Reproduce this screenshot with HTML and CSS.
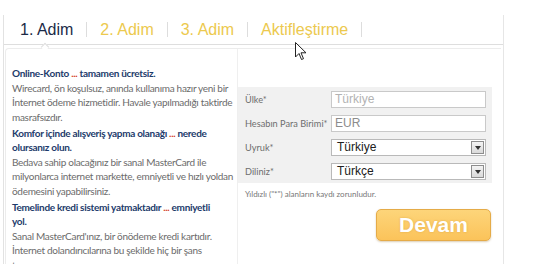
FILE: index.html
```html
<!DOCTYPE html>
<html lang="tr">
<head>
    <meta charset="UTF-8">
    <meta name="viewport" content="width=device-width, initial-scale=1.0">
    <title>Kayıt</title>
    <link rel="stylesheet" href="styles.css">
</head>
<body>
    <div class="wizard">
        <div class="tabs">
            <span class="tab active">1. Adim</span>
            <span class="sep"></span>
            <span class="tab">2. Adim</span>
            <span class="sep"></span>
            <span class="tab">3. Adim</span>
            <span class="sep"></span>
            <span class="tab">Aktifleştirme</span>
            <span class="sep"></span>
        </div>

        <div class="content">
            <div class="info">
                <h4>Online-Konto <span class="dots">...</span> tamamen ücretsiz.</h4>
                <p>Wirecard, ön koşulsuz, anında kullanıma hazır yeni bir<br>
                İnternet ödeme hizmetidir. Havale yapılmadığı taktirde<br>
                masrafsızdır.</p>
                <h4>Komfor içinde alışveriş yapma olanağı <span class="dots">...</span> nerede<br>
                olursanız olun.</h4>
                <p>Bedava sahip olacağınız bir sanal MasterCard ile<br>
                milyonlarca internet markette, emniyetli ve hızlı yoldan<br>
                ödemesini yapabilirsiniz.</p>
                <h4>Temelinde kredi sistemi yatmaktadır <span class="dots">...</span> emniyetli<br>
                yol.</h4>
                <p>Sanal MasterCard'ınız, bir önödeme kredi kartıdır.<br>
                İnternet dolandırıcılarına bu şekilde hiç bir şans<br>
                tanınmaz.</p>
            </div>

            <div class="form">
                <div class="fields">
                    <div class="row">
                        <label>Ülke*</label>
                        <div class="field light">Türkiye</div>
                    </div>
                    <div class="row">
                        <label>Hesabın Para Birimi*</label>
                        <div class="field">EUR</div>
                    </div>
                    <div class="row">
                        <label>Uyruk*</label>
                        <div class="field select">Türkiye<span class="arrow"></span></div>
                    </div>
                    <div class="row">
                        <label>Diliniz*</label>
                        <div class="field select">Türkçe<span class="arrow"></span></div>
                    </div>
                </div>
                <p class="note">Yıldızlı ("*") alanların kaydı zorunludur.</p>
                <div class="actions">
                    <button class="next">Devam</button>
                </div>
            </div>
        </div>
    </div>

    <svg class="cursor" width="12" height="19" viewBox="0 0 12 19">
        <path d="M0.5 0.5 L0.5 15 L4 11.5 L6.5 17.5 L8.5 16.7 L6 10.8 L11 10.8 Z" fill="#fff" stroke="#222" stroke-width="1"/>
    </svg>
</body>
</html>
```

FILE: styles.css
```css
body {
    margin: 0;
    background: #fff;
    font-family: Lato, "Open Sans", sans-serif;
    position: relative;
    overflow: hidden;
}
.wizard {
    margin: 15px 0 0 3px;
    width: 501px;
    height: 249px;
    box-sizing: border-box;
    border-left: 1px solid #e2e2e2;
    border-right: 1px solid #e6e6e6;
}
.tabs {
    display: flex;
    align-items: center;
    gap: 13px;
    height: 29px;
    padding-left: 16px;
    border-bottom: 1px solid #dedede;
    font-family: "Liberation Sans", Arial, sans-serif;
    font-size: 16px;
}
.tab {
    color: #ecc94e;
    position: relative;
}
.tab.active {
    color: #1b2a47;
}
.tab.active::after {
    content: "";
    position: absolute;
    left: 22px;
    bottom: -11px;
    width: 5px;
    height: 5px;
    background: #fff;
    border-left: 1px solid #dedede;
    border-top: 1px solid #dedede;
    transform: rotate(45deg);
}
.sep {
    width: 1px;
    height: 15px;
    background: #dddddd;
}
.content {
    display: flex;
    margin: 3px 2px 0 1px;
    border-top: 1px solid #ececec;
    border-left: 1px solid #ececec;
    border-top-left-radius: 4px;
    height: 220px;
}
.info {
    width: 224px;
    padding: 17px 1px 0 6px;
    border-right: 1px solid #efefef;
    font-size: 10px;
    line-height: 14.5px;
    white-space: nowrap;
    overflow: hidden;
}
.info h4 {
    margin: 0;
    font-size: 10px;
    letter-spacing: -0.3px;
    font-weight: bold;
    color: #1d3b6b;
}
.info .dots {
    color: #d3321e;
}
.info p {
    margin: 0 0 1.5px;
    letter-spacing: -0.3px;
    color: #6b6b6b;
}
.form {
    flex: 1;
    padding-top: 38px;
}
.fields {
    width: 254px;
    background: #f1f1f1;
}
.row {
    display: flex;
    align-items: center;
    height: 24px;
    padding-left: 7px;
}
.row label {
    width: 86px;
    white-space: nowrap;
    font-size: 9.2px;
    color: #6e6e6e;
}
.field {
    position: relative;
    width: 155px;
    height: 17px;
    box-sizing: border-box;
    border: 1px solid #c9c9c9;
    background: #fff;
    padding-left: 3px;
    font-family: "Liberation Sans", Arial, sans-serif;
    font-size: 12px;
    line-height: 15px;
    color: #8c8c8c;
}
.field.light {
    color: #b3b3b3;
}
.field.select {
    color: #202020;
    padding-left: 5px;
    border-color: #b9b9b9;
}
.arrow {
    position: absolute;
    right: 1px;
    top: 1px;
    width: 13px;
    height: 13px;
    box-sizing: border-box;
    border: 1px solid #8d8d8d;
    background: linear-gradient(#f4f4f4, #d9d9d9);
}
.arrow::after {
    content: "";
    position: absolute;
    left: 3px;
    top: 4px;
    border-left: 3px solid transparent;
    border-right: 3px solid transparent;
    border-top: 4px solid #333;
}
.note {
    margin: 6px 0 0 7px;
    font-size: 8px;
    color: #777;
}
.actions {
    display: flex;
    justify-content: flex-end;
    width: 253px;
    margin-top: 10px;
}
.next {
    width: 115px;
    height: 32px;
    border: 1px solid #e5ab48;
    border-radius: 5px;
    background: linear-gradient(#fdd57a, #fbc35a);
    box-shadow: 0 1px 2px rgba(150, 110, 40, 0.35);
    color: #fff;
    font-family: "Liberation Sans", Arial, sans-serif;
    font-weight: bold;
    font-size: 21px;
    text-shadow: 0 0 2px rgba(200, 140, 40, 0.5);
    padding: 0;
}
.cursor {
    position: absolute;
    left: 295px;
    top: 42px;
}
```
